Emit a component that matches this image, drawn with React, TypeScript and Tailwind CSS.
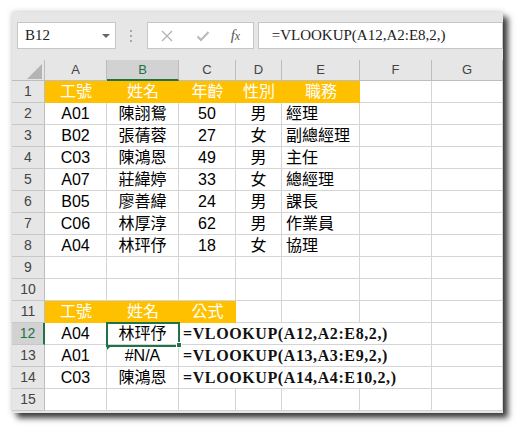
import React from 'react';

type CellDef = {
  t?: string;
  gold?: boolean;
  left?: boolean;
  span?: number;
  formula?: boolean;
  err?: boolean;
};

const letters = ['A', 'B', 'C', 'D', 'E', 'F', 'G'];

const head = (t: string): CellDef => ({ t, gold: true });
const c = (t: string): CellDef => ({ t });
const l = (t: string): CellDef => ({ t, left: true });
const empty: CellDef = {};

const data: [string, string, string, string, string][] = [
  ['A01', '陳詡鴛', '50', '男', '經理'],
  ['B02', '張蒨蓉', '27', '女', '副總經理'],
  ['C03', '陳鴻恩', '49', '男', '主任'],
  ['A07', '莊緯婷', '33', '女', '總經理'],
  ['B05', '廖善緯', '24', '男', '課長'],
  ['C06', '林厚淳', '62', '男', '作業員'],
  ['A04', '林玶伃', '18', '女', '協理'],
];

const blank = (): CellDef[] => Array.from({ length: 7 }, () => ({ ...empty }));

const rows: CellDef[][] = [
  [head('工號'), head('姓名'), head('年齡'), head('性別'), head('職務'), empty, empty],
  ...data.map((d) => [c(d[0]), c(d[1]), c(d[2]), c(d[3]), l(d[4]), empty, empty]),
  blank(),
  blank(),
  [head('工號'), head('姓名'), head('公式'), empty, empty, empty, empty],
  [c('A04'), c('林玶伃'), { t: '=VLOOKUP(A12,A2:E8,2,)', formula: true, span: 4 }, empty],
  [c('A01'), { t: '#N/A', err: true }, { t: '=VLOOKUP(A13,A3:E9,2,)', formula: true, span: 4 }, empty],
  [c('C03'), c('陳鴻恩'), { t: '=VLOOKUP(A14,A4:E10,2,)', formula: true, span: 4 }, empty],
  blank(),
];

const dataFont = { fontFamily: '"Liberation Sans", "Noto Sans CJK TC", sans-serif' };

function GridCell({ cell }: { cell: CellDef }) {
  const span = cell.span === 4 ? 'col-span-4' : '';
  if (cell.formula) {
    return (
      <div
        className={`${span} h-[22px] border-r border-b border-[#d4d4d4] bg-white flex items-center pl-[4px] text-[16px] font-bold tracking-[0.6px] text-[#111] whitespace-nowrap`}
        style={{ fontFamily: '"Liberation Serif", serif' }}
      >
        {cell.t}
      </div>
    );
  }
  if (cell.gold) {
    return (
      <div
        className="h-[22px] bg-[#ffc000] flex items-center justify-center text-[16px] text-white"
        style={dataFont}
      >
        {cell.t}
      </div>
    );
  }
  return (
    <div
      className={`relative h-[22px] border-r border-b border-[#d4d4d4] bg-white flex items-center text-[16px] text-black whitespace-nowrap ${
        cell.left ? 'justify-start pl-[4px]' : 'justify-center'
      }`}
      style={dataFont}
    >
      {cell.err && (
        <span className="absolute left-0 top-0 w-0 h-0 border-t-[5px] border-r-[5px] border-t-[#217346] border-r-transparent" />
      )}
      {cell.t}
    </div>
  );
}

export default function App() {
  return (
    <div className="w-[523px] h-[434px] bg-white pl-[12px] pt-[12px]">
      <div className="w-[491px] h-[401px] bg-[#e6e6e6] overflow-hidden shadow-[5px_5px_6px_rgba(0,0,0,0.75),0_0_6px_rgba(0,0,0,0.2)]">
        {/* formula bar */}
        <div className="h-[48px] pt-[10px] pl-[5px] flex items-start">
          <div className="w-[101px] h-[27px] bg-white border border-[#c6c6c6] flex items-center justify-between pl-[7px] pr-[5px]">
            <span className="text-[15px] text-[#222]" style={{ fontFamily: '"Liberation Serif", serif' }}>
              B12
            </span>
            <span className="w-0 h-0 border-l-[4px] border-r-[4px] border-t-[4px] border-l-transparent border-r-transparent border-t-[#666]" />
          </div>
          <div className="w-[31px] h-[27px] flex flex-col items-center justify-center gap-[3px]">
            <span className="w-[2px] h-[2px] bg-[#a6a6a6]" />
            <span className="w-[2px] h-[2px] bg-[#a6a6a6]" />
            <span className="w-[2px] h-[2px] bg-[#a6a6a6]" />
          </div>
          <div className="w-[109px] h-[27px] bg-white border border-[#c6c6c6] flex items-center pl-[13px]">
            <svg width="12" height="12" viewBox="0 0 12 12">
              <path d="M1 1L11 11M11 1L1 11" stroke="#b3b3b3" strokeWidth="1.3" />
            </svg>
            <svg width="14" height="12" viewBox="0 0 14 12" className="ml-[23px]">
              <path d="M1.5 6.5L5 10L12.5 2" stroke="#b8b8b8" strokeWidth="2" fill="none" />
            </svg>
            <span
              className="ml-[21px] text-[15px] italic text-[#555] leading-none"
              style={{ fontFamily: '"Liberation Serif", serif' }}
            >
              f<span className="text-[12px]">x</span>
            </span>
          </div>
          <div className="ml-[4px] w-[250px] h-[27px] bg-white border border-[#c6c6c6] flex items-center pl-[13px]">
            <span className="text-[15px] text-[#222] whitespace-nowrap" style={{ fontFamily: '"Liberation Serif", serif' }}>
              =VLOOKUP(A12,A2:E8,2,)
            </span>
          </div>
        </div>

        {/* sheet */}
        <div className="relative grid grid-cols-[33px_62px_72px_57px_46px_78px_72px_71px]">
          <div className="relative h-[21px] bg-[#e6e6e6] border-r border-b border-[#bdbdbd]">
            <svg className="absolute right-[2px] bottom-[1px]" width="15" height="15" viewBox="0 0 15 15">
              <polygon points="15,0 15,15 0,15" fill="#b4b4b4" />
            </svg>
          </div>
          {letters.map((ch) => {
            const sel = ch === 'B';
            return (
              <div
                key={ch}
                className={`h-[21px] flex items-center justify-center text-[13px] border-r ${
                  sel
                    ? 'bg-[#d2d2d2] text-[#217346] border-b-2 border-b-[#217346] border-r-[#bdbdbd]'
                    : 'bg-[#e6e6e6] text-[#444] border-b border-[#bdbdbd]'
                }`}
                style={{ fontFamily: '"Liberation Sans", sans-serif' }}
              >
                {ch}
              </div>
            );
          })}

          {rows.map((row, ri) => {
            const n = ri + 1;
            const sel = n === 12;
            return (
              <React.Fragment key={n}>
                <div
                  className={`h-[22px] flex items-center justify-center text-[14px] border-b border-[#c8c8c8] ${
                    sel
                      ? 'bg-[#d2d2d2] text-[#217346] border-r-2 border-r-[#217346]'
                      : 'bg-[#e6e6e6] text-[#444] border-r border-r-[#bdbdbd]'
                  }`}
                  style={{ fontFamily: '"Liberation Sans", sans-serif' }}
                >
                  {n}
                </div>
                {row.map((cell, ci) => (
                  <GridCell key={ci} cell={cell} />
                ))}
              </React.Fragment>
            );
          })}

          {/* active cell B12 */}
          <div className="absolute left-[94px] top-[262px] w-[74px] h-[25px] border-2 border-[#217346] pointer-events-none" />
          <div className="absolute left-[164px] top-[282px] w-[6px] h-[6px] bg-[#217346] border border-white" />
        </div>
      </div>
    </div>
  );
}
